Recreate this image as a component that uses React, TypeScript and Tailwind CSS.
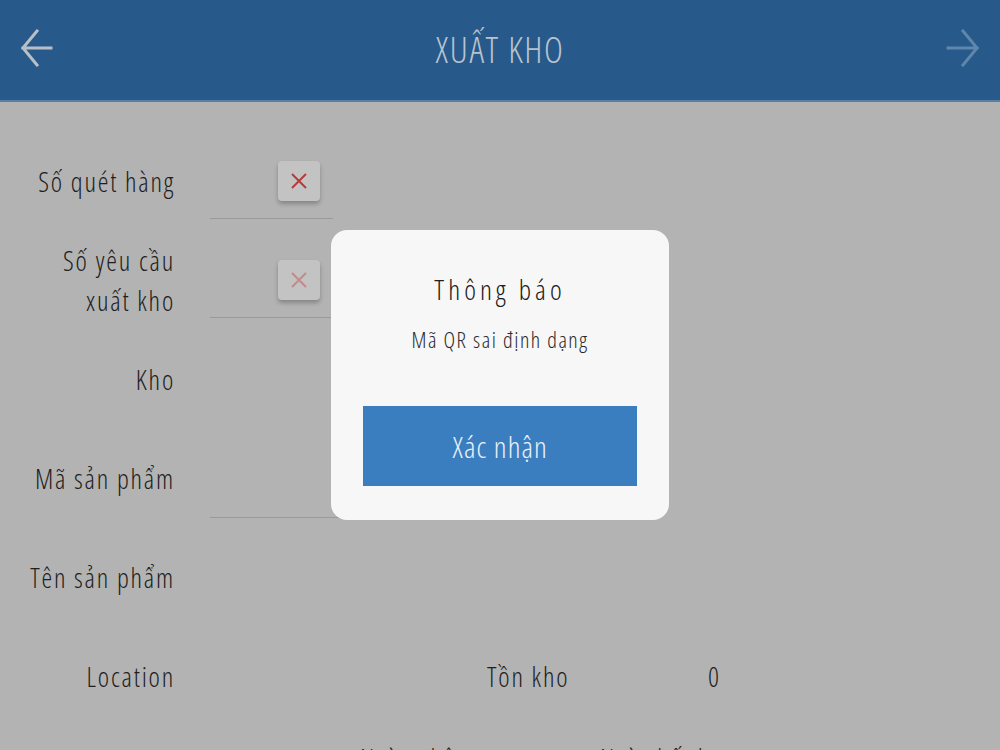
import React from 'react';

const BackArrow = () => (
  <svg width="40" height="44" viewBox="0 0 40 44" fill="none">
    <path d="M3 20 L17 3 M3 20 L17 37 M3 20 L31 20" stroke="#b9bfc6" strokeWidth="3" strokeLinecap="square" />
  </svg>
);

const NextArrow = () => (
  <svg width="40" height="44" viewBox="0 0 40 44" fill="none">
    <path d="M37 20 L23 3 M37 20 L23 37 M8 20 L37 20" stroke="#5f86ab" strokeWidth="3" strokeLinecap="square" />
  </svg>
);

const ClearButton = ({ faded }: { faded?: boolean }) => (
  <div className="flex h-[40px] w-[42px] items-center justify-center rounded-[4px] bg-[#c3c3c3] shadow-[0_3px_4px_rgba(0,0,0,0.25)]">
    <svg width="18" height="18" viewBox="0 0 18 18">
      <path d="M2 2 L16 16 M16 2 L2 16" stroke={faded ? '#c48a8a' : '#b83a3a'} strokeWidth="2" />
    </svg>
  </div>
);

const Label = ({ children }: { children: React.ReactNode }) => (
  <div className="mr-[-2px] w-[175px] shrink-0 text-right text-[27px] leading-[40px] tracking-[1.8px] text-[#1e1e1e]">{children}</div>
);

export default function App() {
  return (
    <div className="relative h-[750px] w-[1000px] overflow-hidden bg-[#b3b3b3] font-['Open_Sans',sans-serif] font-stretch-[75%]">
      {/* top bar */}
      <header className="flex h-[102px] items-center justify-between border-b-2 border-[#5680a6] bg-[#27598a] pl-[20px] pr-[20px]">
        <BackArrow />
        <h1 className="text-[36px] font-light tracking-[1.6px] text-[#b7c3cf]">XUẤT KHO</h1>
        <NextArrow />
      </header>

      <main className="pt-[30px] font-[350]">
        <div className="flex h-[99px] items-center">
          <Label>Số quét hàng</Label>
          <div className="ml-[37px] flex h-[74px] w-[123px] items-center justify-end border-b border-[#9a9a9a] pr-[13px]">
            <ClearButton />
          </div>
        </div>

        <div className="flex h-[99px] items-center">
          <Label>
            Số yêu cầu
            <br />
            xuất kho
          </Label>
          <div className="ml-[37px] flex h-[74px] w-[123px] items-center justify-end border-b border-[#9a9a9a] pr-[13px]">
            <ClearButton faded />
          </div>
        </div>

        <div className="flex h-[99px] items-center">
          <Label>Kho</Label>
        </div>

        <div className="flex h-[99px] items-center">
          <Label>Mã sản phẩm</Label>
          <div className="ml-[37px] mt-[5px] h-[74px] w-[140px] border-b border-[#9a9a9a]" />
        </div>

        <div className="flex h-[99px] items-center">
          <Label>Tên sản phẩm</Label>
        </div>

        <div className="flex h-[99px] items-center text-[27px] leading-[40px] tracking-[1.8px] text-[#1e1e1e]">
          <Label>Location</Label>
          <div className="w-[314px] shrink-0" />
          <div className="w-[221px] shrink-0">Tồn kho</div>
          <div>0</div>
        </div>

        <div className="flex h-[99px] items-start pt-[13px] text-[27px] leading-[40px] tracking-[1.8px] text-[#1e1e1e]">
          <div className="w-[360px] shrink-0" />
          <div className="w-[240px] shrink-0">Ngày nhập</div>
          <div>Ngày hết hạn</div>
        </div>
      </main>

      {/* alert dialog */}
      <div className="absolute left-[331px] top-[230px] flex h-[290px] w-[338px] flex-col items-center rounded-[16px] bg-[#f7f7f7] pt-[41px] font-[350]">
        <div className="text-[28px] leading-[36px] tracking-[4px] text-[#202020]">Thông báo</div>
        <div className="mt-[17px] text-[22px] leading-[30px] tracking-[1.5px] text-[#2a2a2a]">Mã QR sai định dạng</div>
        <button className="mt-[52px] flex h-[80px] w-[274px] items-center justify-center bg-[#3a7ebf] text-[30px] tracking-[1px] text-[#e8eff7]">
          Xác nhận
        </button>
      </div>
    </div>
  );
}
